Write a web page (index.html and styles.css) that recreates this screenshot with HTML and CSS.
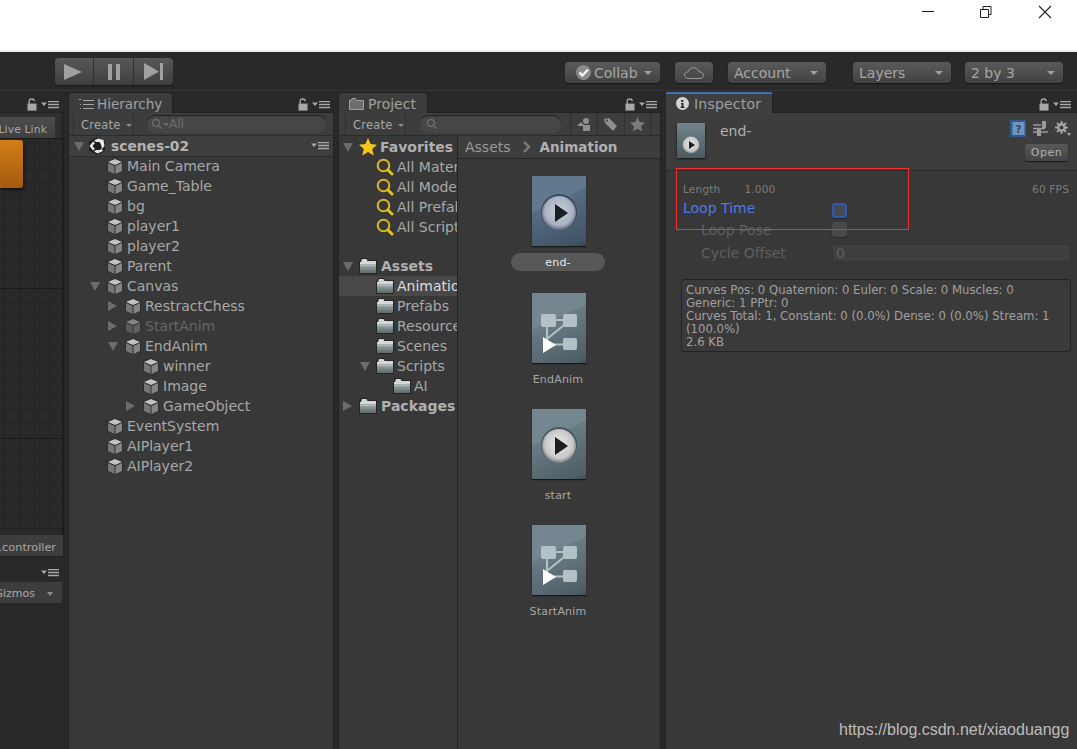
FILE: index.html
```html
<!DOCTYPE html>
<html lang="en">
<head>
<meta charset="utf-8">
<title>Unity Editor</title>
<link rel="stylesheet" href="styles.css">
</head>
<body>
<svg class="defs" width="0" height="0" aria-hidden="true">
  <defs>
    <linearGradient id="folderG" x1="0" y1="0" x2="0" y2="1"><stop offset="0" stop-color="#a9b3b3"/><stop offset=".35" stop-color="#8b9797"/><stop offset="1" stop-color="#5d6a6a"/></linearGradient>
    <radialGradient id="discG" cx=".5" cy=".45" r=".55"><stop offset="0" stop-color="#e8e8e8"/><stop offset=".75" stop-color="#c9c9c9"/><stop offset="1" stop-color="#77787a"/></radialGradient>
    <radialGradient id="discB" cx=".5" cy=".45" r=".55"><stop offset="0" stop-color="#c9d0dc"/><stop offset=".75" stop-color="#aab3c4"/><stop offset="1" stop-color="#5f6b7c"/></radialGradient>
    <symbol id="cube" viewBox="0 0 16 17">
      <path d="M8 0 16 3.500V13L8 17 0 13V3.500Z" fill="#2c2c2c"/>
      <path d="M8 1 15 4 8 7 1 4Z" fill="#c2c2c2"/>
      <path d="M1 5 7.500 8V16L1 13Z" fill="#767676"/>
      <path d="M15 5 8.500 8V16L15 13Z" fill="#858585"/>
    </symbol>
    <symbol id="folder" viewBox="0 0 18 16">
      <path d="M0 3H1L2 0H8L9 2H18V16H0Z" fill="#242424"/>
      <path d="M1 4H2L3 1H7.500L8.500 3H17V6H1Z" fill="#d3d8d8"/>
      <rect x="1" y="6" width="16" height="9" fill="url(#folderG)"/>
      <rect x="1" y="7" width="16" height="1" fill="#c2caca" opacity=".6"/>
    </symbol>
    <symbol id="lens" viewBox="0 0 18 18">
      <circle cx="7.500" cy="7.500" r="5.800" fill="none" stroke="#dcb91e" stroke-width="2"/>
      <path d="M12 12 16 16" stroke="#e6c21d" stroke-width="3" stroke-linecap="round"/>
    </symbol>
    <symbol id="star" viewBox="0 0 18 18">
      <path d="M9 0 11.600 6 18 6.800 13.200 11 14.700 17.500 9 14 3.300 17.500 4.800 11 0 6.800 6.400 6Z" fill="currentColor"/>
    </symbol>
    <symbol id="lock" viewBox="0 0 10 13">
      <path d="M2.200 6V3.400C2.200 1.800 3.300 1 4.700 1S7.200 1.800 7.200 3.200" fill="none" stroke="#a8a8a8" stroke-width="1.300"/>
      <rect x="0.500" y="5.600" width="9" height="7" fill="#a8a8a8"/>
    </symbol>
    <symbol id="menu" viewBox="0 0 18 8">
      <path d="M0 1.500H6L3 5Z" fill="#a8a8a8"/>
      <path d="M7 .5H18M7 3.500H18M7 6.500H18" stroke="#a8a8a8" stroke-width="1.500"/>
    </symbol>
    <symbol id="graph" viewBox="0 0 54 70">
      <path d="M16 27H38M15 30V46L37 28M18 51.500H36" stroke="#b4c2c8" stroke-width="2" fill="none"/>
      <rect x="9" y="21" width="15" height="13" rx="2" fill="#b4c2c8"/>
      <rect x="31" y="21" width="14" height="13" rx="2" fill="#b4c2c8"/>
      <rect x="31" y="45" width="14" height="12" rx="2" fill="#b4c2c8"/>
      <path d="M11 44 24 52 11 60Z" fill="#fff"/>
    </symbol>
    <symbol id="clip" viewBox="0 0 54 70">
      <circle cx="27" cy="36" r="18" fill="#3b4650" opacity=".7"/>
      <circle cx="27" cy="37" r="17" fill="url(#discG)"/>
      <path d="M23 28 36 37 23 46Z" fill="#1d1d1d"/>
    </symbol>
    <symbol id="clipSel" viewBox="0 0 54 70">
      <circle cx="27" cy="36" r="18" fill="#2d3948" opacity=".7"/>
      <circle cx="27" cy="37" r="17" fill="url(#discB)"/>
      <path d="M23 28 36 37 23 46Z" fill="#1a1d22"/>
    </symbol>
  </defs>
</svg>

<div class="app">
  <header class="titlebar">
    <svg class="winbtn" width="58" height="14" viewBox="0 0 58 14"><path d="M0 6.500H12" stroke="#222" fill="none"/></svg>
    <svg class="winbtn" width="58" height="14" viewBox="0 0 58 14"><path d="M.5 4.500H8.500V12.500H.5ZM3 4V1.500H11V9.500H9" stroke="#222" fill="none"/></svg>
    <svg class="winbtn" width="14" height="14" viewBox="0 0 14 14"><path d="M1 1 13 13M13 1 1 13" stroke="#222" stroke-width="1.100" fill="none"/></svg>
  </header>

  <div class="toolbar">
    <div class="playgroup">
      <button class="pbtn pbtn-play"><svg width="18" height="18" viewBox="0 0 18 18"><path d="M0 1 18 9 0 17Z" fill="#a0a0a0"/></svg></button>
      <button class="pbtn pbtn-pause"><svg width="12" height="16" viewBox="0 0 12 16"><path d="M0 0H4V16H0ZM8 0H12V16H8Z" fill="#a0a0a0"/></svg></button>
      <button class="pbtn pbtn-step"><svg width="19" height="17" viewBox="0 0 19 17"><path d="M0 0 15 8.500 0 17ZM16 0H19V17H16Z" fill="#a0a0a0"/></svg></button>
    </div>
    <div class="tb-spacer"></div>
    <button class="tbtn collab"><svg class="check-ico" width="15" height="15" viewBox="0 0 15 15"><circle cx="7.500" cy="7.500" r="7.500" fill="#8a8a8a"/><path d="M3.500 7.500 6.500 10.500 12 4.500" stroke="#f2f2f2" stroke-width="2.500" fill="none"/></svg><span>Collab</span><i class="caret"></i></button>
    <button class="tbtn cloud"><svg width="20" height="12" viewBox="0 0 20 12"><path d="M4.500 11.500C2 11.500.5 10 .5 8 .5 6 2 5 3.800 5 4.500 2.500 6.500.8 9.500.8 12.500.8 14.500 2.500 15 4.800 17.500 4.800 19.500 6 19.500 8.200 19.500 10.200 18 11.500 16 11.500Z" fill="none" stroke="#9a9a9a"/></svg></button>
    <button class="tbtn account"><span>Account</span><i class="caret"></i></button>
    <button class="tbtn layers"><span>Layers</span><i class="caret"></i></button>
    <button class="tbtn layout"><span>2 by 3</span><i class="caret"></i></button>
  </div>

  <main class="workspace">
    <section class="panel p-anim">
      <div class="phead"><div class="pctl"><svg class="i-lock"><use href="#lock"/></svg><svg class="i-menu"><use href="#menu"/></svg></div></div>
      <div class="anim-top"><span class="livelink">Live Link</span></div>
      <div class="graph"><div class="state"></div></div>
      <div class="anim-path"><span>.controller</span></div>
      <div class="phead phead-second"><div class="pctl"><svg class="i-menu"><use href="#menu"/></svg></div></div>
      <div class="gizmos"><span>Gizmos</span><i class="gsep"></i><i class="caret"></i></div>
      <div class="dark-fill"></div>
    </section>

    <section class="panel p-hier">
      <div class="phead">
        <div class="tab tab-hier"><svg class="tabicon" width="15" height="12" viewBox="0 0 15 12"><path d="M0 1.500H2M4 2.500H15M4 6.500H15M4 10.500H15M1 6.500H2M1 10.500H2" stroke="#a8a8a8" stroke-width="1.200" fill="none"/></svg><span>Hierarchy</span></div>
        <div class="pctl"><svg class="i-lock"><use href="#lock"/></svg><svg class="i-menu"><use href="#menu"/></svg></div>
      </div>
      <div class="pbar">
        <div class="create"><span>Create</span><i class="caret small"></i></div>
        <div class="search search-h"><svg width="12" height="12" viewBox="0 0 12 12"><circle cx="5" cy="5" r="3.500" fill="none" stroke="#6c6c6c" stroke-width="1.500"/><path d="M7.500 7.500 10.500 10.500" stroke="#6c6c6c" stroke-width="1.500"/></svg><i class="caret tiny"></i><span>All</span></div>
      </div>
      <div class="sceneRow">
        <i class="arr down"></i>
        <svg class="unity" width="18" height="18" viewBox="0 0 18 18"><path d="M9 0 17 4.500V13.500L9 18 1 13.500V4.500Z" fill="#1e1e1e"/><path d="M10 1.500 15.500 3 16.500 9 14 12 13 7.500 11.500 5H8L6 3.500ZM5 4.500 7 6 4.500 9 7 12 5 13.500 1.500 9ZM8 13H12L13.500 11.500 15 14 9.500 16.500 6 14.500Z" fill="#e8e8e8"/></svg>
        <strong>scenes-02</strong>
        <svg class="i-menu"><use href="#menu"/></svg>
      </div>
      <ul class="tree">
        <li class="row d1"><i class="slot"></i><svg class="i-cube"><use href="#cube"/></svg><span>Main Camera</span></li>
        <li class="row d1"><i class="slot"></i><svg class="i-cube"><use href="#cube"/></svg><span>Game_Table</span></li>
        <li class="row d1"><i class="slot"></i><svg class="i-cube"><use href="#cube"/></svg><span>bg</span></li>
        <li class="row d1"><i class="slot"></i><svg class="i-cube"><use href="#cube"/></svg><span>player1</span></li>
        <li class="row d1"><i class="slot"></i><svg class="i-cube"><use href="#cube"/></svg><span>player2</span></li>
        <li class="row d1"><i class="slot"></i><svg class="i-cube"><use href="#cube"/></svg><span>Parent</span></li>
        <li class="row d1"><i class="slot"><i class="arr down"></i></i><svg class="i-cube"><use href="#cube"/></svg><span>Canvas</span></li>
        <li class="row d2"><i class="slot"><i class="arr right"></i></i><svg class="i-cube"><use href="#cube"/></svg><span>RestractChess</span></li>
        <li class="row d2 inactive"><i class="slot"><i class="arr right"></i></i><svg class="i-cube"><use href="#cube"/></svg><span>StartAnim</span></li>
        <li class="row d2"><i class="slot"><i class="arr down"></i></i><svg class="i-cube"><use href="#cube"/></svg><span>EndAnim</span></li>
        <li class="row d3"><i class="slot"></i><svg class="i-cube"><use href="#cube"/></svg><span>winner</span></li>
        <li class="row d3"><i class="slot"></i><svg class="i-cube"><use href="#cube"/></svg><span>Image</span></li>
        <li class="row d3"><i class="slot"><i class="arr right"></i></i><svg class="i-cube"><use href="#cube"/></svg><span>GameObject</span></li>
        <li class="row d1"><i class="slot"></i><svg class="i-cube"><use href="#cube"/></svg><span>EventSystem</span></li>
        <li class="row d1"><i class="slot"></i><svg class="i-cube"><use href="#cube"/></svg><span>AIPlayer1</span></li>
        <li class="row d1"><i class="slot"></i><svg class="i-cube"><use href="#cube"/></svg><span>AIPlayer2</span></li>
      </ul>
    </section>

    <section class="panel p-proj">
      <div class="phead">
        <div class="tab tab-proj"><svg class="tabicon" width="15" height="12" viewBox="0 0 15 12"><path d="M.5 2.500H2L3 .5H6.500L7.500 2.500H14.500V11.500H.5Z" fill="#6e6e6e" stroke="#a0a0a0"/></svg><span>Project</span></div>
        <div class="pctl"><svg class="i-lock"><use href="#lock"/></svg><svg class="i-menu"><use href="#menu"/></svg></div>
      </div>
      <div class="pbar">
        <div class="create"><span>Create</span><i class="caret small"></i></div>
        <div class="search search-p"><svg width="12" height="12" viewBox="0 0 12 12"><circle cx="5" cy="5" r="3.500" fill="none" stroke="#6c6c6c" stroke-width="1.500"/><path d="M7.500 7.500 10.500 10.500" stroke="#6c6c6c" stroke-width="1.500"/></svg></div>
        <div class="pbar-tools">
          <span class="ptool"><svg width="14" height="13" viewBox="0 0 14 13"><path d="M0 8 4 4 8 8Z" fill="#8e8e8e"/><circle cx="9" cy="3" r="3" fill="#8e8e8e"/><rect x="6" y="7" width="7" height="6" fill="#8e8e8e"/></svg></span>
          <span class="ptool"><svg width="14" height="13" viewBox="0 0 14 13"><path d="M0 1 5 0 13 8 9 13 1 5Z" fill="#8e8e8e"/><circle cx="3" cy="2.500" r="1" fill="#3a3a3a"/></svg></span>
          <span class="ptool ptool-star"><svg class="i-star-g"><use href="#star"/></svg></span>
        </div>
      </div>
      <div class="proj-body">
        <div class="proj-tree">
          <div class="pr b"><i class="pslot"><i class="arr down"></i></i><svg class="i-star"><use href="#star"/></svg><span>Favorites</span></div>
          <div class="pr c"><svg class="i-lens"><use href="#lens"/></svg><span>All Materials</span></div>
          <div class="pr c"><svg class="i-lens"><use href="#lens"/></svg><span>All Models</span></div>
          <div class="pr c"><svg class="i-lens"><use href="#lens"/></svg><span>All Prefabs</span></div>
          <div class="pr c"><svg class="i-lens"><use href="#lens"/></svg><span>All Scripts</span></div>
          <div class="pr-gap"></div>
          <div class="pr b"><i class="pslot"><i class="arr down"></i></i><svg class="i-folder"><use href="#folder"/></svg><span>Assets</span></div>
          <div class="pr c active"><svg class="i-folder"><use href="#folder"/></svg><span>Animation</span></div>
          <div class="pr c"><svg class="i-folder"><use href="#folder"/></svg><span>Prefabs</span></div>
          <div class="pr c"><svg class="i-folder"><use href="#folder"/></svg><span>Resources</span></div>
          <div class="pr c"><svg class="i-folder"><use href="#folder"/></svg><span>Scenes</span></div>
          <div class="pr s"><i class="pslot"><i class="arr down"></i></i><svg class="i-folder"><use href="#folder"/></svg><span>Scripts</span></div>
          <div class="pr e"><svg class="i-folder"><use href="#folder"/></svg><span>AI</span></div>
          <div class="pr b"><i class="pslot"><i class="arr right"></i></i><svg class="i-folder"><use href="#folder"/></svg><span>Packages</span></div>
        </div>
        <div class="proj-assets">
          <div class="crumbs"><span>Assets</span><svg width="8" height="12" viewBox="0 0 8 12"><path d="M1 1 6 6 1 11" fill="none" stroke="#777" stroke-width="2.500"/></svg><strong>Animation</strong></div>
          <div class="assets">
            <figure class="asset selected"><div class="thumb"><svg class="thumb-art"><use href="#clipSel"/></svg></div><figcaption>end-</figcaption></figure>
            <figure class="asset"><div class="thumb"><svg class="thumb-art"><use href="#graph"/></svg></div><figcaption>EndAnim</figcaption></figure>
            <figure class="asset"><div class="thumb"><svg class="thumb-art"><use href="#clip"/></svg></div><figcaption>start</figcaption></figure>
            <figure class="asset"><div class="thumb"><svg class="thumb-art"><use href="#graph"/></svg></div><figcaption>StartAnim</figcaption></figure>
          </div>
        </div>
      </div>
    </section>

    <section class="panel p-insp">
      <div class="phead">
        <div class="tab tab-insp"><svg class="tabicon" width="13" height="13" viewBox="0 0 13 13"><circle cx="6.500" cy="6.500" r="6.500" fill="#d4d4d4"/><path d="M5 3H7.500V4.800H5ZM5 6H7.500V9.800H8.500V11H4.500V9.800H5.500V7H5Z" fill="#2a2a2a"/></svg><span>Inspector</span></div>
        <div class="pctl"><svg class="i-lock"><use href="#lock"/></svg><svg class="i-menu"><use href="#menu"/></svg></div>
      </div>
      <div class="insp-head">
        <div class="insp-icon"><svg width="18" height="18" viewBox="0 0 18 18"><circle cx="9" cy="9" r="8.500" fill="url(#discG)"/><path d="M7 5 13 9 7 13Z" fill="#1d1d1d"/></svg></div>
        <div class="insp-name">end-</div>
        <div class="insp-actions">
          <div class="insp-tools">
            <svg width="16" height="17" viewBox="0 0 16 17"><rect width="16" height="17" fill="#2f5a8c"/><rect x="2.500" y="2" width="12" height="13" fill="#6f95bd"/><text x="8.500" y="12.500" font-size="10" font-family="DejaVu Sans" font-weight="700" text-anchor="middle" fill="#24466e">?</text></svg>
            <svg width="15" height="15" viewBox="0 0 15 15"><path d="M0 4H8M0 11H15M0 7.500H12" stroke="#9a9a9a" stroke-width="1.500"/><rect x="9" y="0" width="4" height="7" fill="#9a9a9a"/><rect x="4" y="8" width="4" height="7" fill="#9a9a9a"/></svg>
            <svg width="16" height="16" viewBox="0 0 16 16"><circle cx="6.500" cy="6.500" r="3.200" fill="none" stroke="#a4a4a4" stroke-width="2.400"/><path d="M6.500 0V3M6.500 10V13M0 6.500H3M10 6.500H13M2 2 4 4M9 9 11 11M11 2 9 4M4 9 2 11" stroke="#a4a4a4" stroke-width="1.800"/><path d="M12 12H16L14 15Z" fill="#a4a4a4"/></svg>
          </div>
          <button class="open">Open</button>
        </div>
      </div>
      <div class="insp-body">
        <div class="clip-meta"><span class="len">Length</span><span class="lenv">1.000</span><span class="fps">60 FPS</span></div>
        <div class="field loop"><label>Loop Time</label><i class="check on"></i></div>
        <div class="field sub off"><label>Loop Pose</label><i class="check"></i></div>
        <div class="field sub off"><label>Cycle Offset</label><div class="numbox">0</div></div>
        <div class="infobox">Curves Pos: 0 Quaternion: 0 Euler: 0 Scale: 0 Muscles: 0<br>Generic: 1 PPtr: 0<br>Curves Total: 1, Constant: 0 (0.0%) Dense: 0 (0.0%) Stream: 1<br>(100.0%)<br>2.6 KB</div>
      </div>
    </section>
  </main>

  <div class="redbox"></div>
  <div class="watermark">https://blog.csdn.net/xiaoduangg</div>
</div>
</body>
</html>
```
FILE: styles.css
```css
* { box-sizing: border-box; }
html, body { margin: 0; padding: 0; height: 100%; overflow: hidden; }
body { font-family: "DejaVu Sans", sans-serif; background: #fff; color: #b4b4b4; }
.defs { position: absolute; }
i { display: block; font-style: normal; }
button { font-family: inherit; padding: 0; margin: 0; }
ul { list-style: none; margin: 0; padding: 0; }
figure { margin: 0; }

.app { position: relative; width: 1077px; height: 749px; display: flex; flex-direction: column; }

/* Window title bar */
.titlebar { height: 52px; flex: none; background: #fff; border-bottom: 2px solid #ececec; display: flex; justify-content: flex-end; align-items: flex-start; padding: 5px 25px 0 0; }
.winbtn { display: block; }

/* Main toolbar */
.toolbar { height: 39px; flex: none; background: #292929; border-bottom: 1px solid #363636; display: flex; align-items: flex-start; padding: 6px 14px 0 55px; }
.tb-spacer { flex: 1; }
.playgroup { display: flex; width: 118px; height: 27px; border-radius: 4px; background: linear-gradient(#585858, #3e3e3e); box-shadow: 0 1px 1px #161616; overflow: hidden; }
.pbtn { height: 27px; border: 0; background: none; display: flex; align-items: center; justify-content: center; border-right: 1px solid #2f2f2f; }
.pbtn-play { width: 39px; padding-right: 3px; }
.pbtn-pause { width: 40px; }
.pbtn-step { width: 39px; border-right: 0; }
.tbtn { height: 21px; margin-top: 4px; border: 0; border-radius: 4px; background: linear-gradient(#5a5a5a, #424242); box-shadow: 0 1px 1px #161616; color: #a6a6a6; font-size: 14px; display: flex; align-items: center; padding: 0 8px 0 6px; }
.tbtn span { flex: 1; text-align: left; }
.collab { width: 95px; margin-right: 15px; padding-left: 11px; }
.collab span { margin-left: 3px; }
.cloud { width: 38px; margin-right: 15px; justify-content: center; padding: 0; }
.account { width: 98px; margin-right: 27px; }
.layers { width: 98px; margin-right: 14px; }
.layout { width: 98px; }
.caret { width: 0; height: 0; flex: none; border-left: 4px solid transparent; border-right: 4px solid transparent; border-top: 4px solid #a0a0a0; }
.caret.small { border-width: 3px 3px 0; border-top-color: #8a8a8a; }
.caret.tiny { border-width: 3px 3px 0; border-top-color: #6c6c6c; }

/* Panels */
.workspace { flex: 1; min-height: 0; background: #292929; display: flex; gap: 4px; }
.panel { display: flex; flex-direction: column; min-width: 0; }
.p-anim { width: 64px; }
.p-hier { width: 266px; background: #383838; }
.p-proj { width: 323px; background: #383838; }
.p-insp { width: 412px; background: #383838; }
.p-hier, .p-proj, .p-insp { border-left: 1px solid #242424; border-right: 1px solid #242424; }
.p-insp { border-right: 0; }

.phead { height: 22px; flex: none; background: #292929; display: flex; align-items: flex-end; justify-content: space-between; padding-right: 3px; position: relative; box-shadow: inset 0 -1px 0 #222; }
.pctl { position: absolute; right: 3px; top: 7px; display: flex; align-items: center; gap: 4px; }
.p-anim .phead .pctl { right: 5px; }
.p-insp .phead .pctl { right: 6px; }
.i-lock { width: 10px; height: 13px; }
.i-menu { width: 18px; height: 8px; }
.tab { height: 21px; background: #3c3c3c; border: 1px solid #232323; border-bottom: 0; border-radius: 3px 3px 0 0; display: flex; align-items: center; font-size: 14px; color: #a0a0a0; margin-left: -1px; padding-top: 1px; position: relative; z-index: 1; }
.tab-hier { width: 105px; padding-left: 10px; gap: 3px; font-size: 13.500px; }
.tab-proj { width: 90px; padding-left: 10px; gap: 4px; }
.tab-insp { width: 108px; padding-left: 10px; gap: 5px; border-top: 2px solid #3f6fb5; background: #3f3f3f; padding-top: 0; letter-spacing: .2px; }
.pbar { height: 23px; flex: none; background: #3d3d3d; border-bottom: 1px solid #2b2b2b; display: flex; align-items: center; position: relative; padding-left: 6px; }
.p-hier .pbar { padding-left: 4px; }
.create { width: 61px; height: 22px; border-left: 1px solid #2f2f2f; border-right: 1px solid #2f2f2f; display: flex; align-items: center; gap: 6px; padding: 2px 0 0 7px; font-size: 11.500px; letter-spacing: .2px; color: #a8a8a8; }
.search { height: 18px; border-radius: 9px; background: #464646; box-shadow: inset 0 1px 1px #1f1f1f; display: flex; align-items: center; padding-left: 5px; font-size: 12px; color: #6e6e6e; }
.search-h { width: 181px; margin-left: 12px; }
.search-p { width: 143px; margin-left: 13px; padding-left: 7px; }
.pbar-tools { display: flex; margin-left: 8px; height: 22px; }
.ptool { width: 27px; display: flex; align-items: center; justify-content: center; border-left: 1px solid #2f2f2f; }
.ptool-star { border-right: 1px solid #2f2f2f; }
.i-star-g { width: 15px; height: 15px; color: #7b7b7b; }

/* Left animator column */
.anim-top { height: 25px; flex: none; background: #303030; border-right: 3px solid #262626; padding-top: 4px; }
.livelink { display: flex; align-items: center; justify-content: flex-end; height: 21px; width: 55px; padding: 3px 8px 0 0; background: linear-gradient(#4c4c4c, #3f3f3f); color: #a8a8a8; font-size: 10.800px; letter-spacing: .1px; white-space: nowrap; overflow: hidden; }
.graph { flex: none; height: 397px; position: relative; border-right: 2px solid #1d1d1d; background-color: #292929;
  background-image:
    linear-gradient(#1a1a1a 1px, transparent 1px),
    linear-gradient(#232323 1px, transparent 1px),
    linear-gradient(90deg, #232323 1px, transparent 1px);
  background-size: 100% 150px, 15px 15px, 15px 15px; background-position: 0 0, 4px 0, 4px 0; }
.state { position: absolute; left: 0; top: 2px; width: 23px; height: 48px; background: linear-gradient(#d27d18, #a55a0e); border-radius: 0 3px 3px 0; box-shadow: 1px 2px 3px #111; }
.anim-path { height: 22px; flex: none; background: #3d3d3d; border-right: 1px solid #222; border-bottom: 1px solid #222; display: flex; align-items: center; justify-content: flex-end; padding: 3px 7px 0 0; font-size: 11.300px; color: #a8a8a8; white-space: nowrap; overflow: hidden; }
.phead-second { height: 25px; box-shadow: none; }
.phead-second .pctl { top: 12px; }
.gizmos { height: 21px; width: 62px; flex: none; background: #3d3d3d; display: flex; align-items: center; justify-content: flex-end; gap: 6px; padding: 2px 9px 0 0; font-size: 11px; color: #a8a8a8; overflow: hidden; white-space: nowrap; position: relative; }
.gizmos .caret { border-width: 4px 3px 0; border-top-color: #909090; }
.gsep { width: 1px; height: 13px; background: #5a5a5a; }
.dark-fill { flex: 1; background: #282828; }

/* Hierarchy */
.sceneRow { height: 21px; flex: none; display: flex; align-items: center; background: #3e3e3e; border-bottom: 1px solid #2a2a2a; padding-left: 5px; position: relative; }
.sceneRow strong { font-size: 13.800px; color: #b4b4b4; margin-left: 5px; }
.sceneRow .i-menu { position: absolute; right: 4px; top: 6px; }
.unity { margin-left: 4px; }
.arr { width: 0; height: 0; flex: none; }
.arr.down { border-left: 5px solid transparent; border-right: 5px solid transparent; border-top: 9px solid #6c6c6c; }
.arr.right { border-top: 5px solid transparent; border-bottom: 5px solid transparent; border-left: 9px solid #6c6c6c; }
.tree { margin-top: -1px; }
.row { height: 20px; display: flex; align-items: center; font-size: 14px; color: #a8a8a8; white-space: nowrap; }
.slot { width: 17px; flex: none; display: flex; justify-content: flex-start; }
.d1 { padding-left: 21px; }
.d2 { padding-left: 39px; }
.d3 { padding-left: 57px; }
.i-cube { width: 16px; height: 17px; flex: none; margin-right: 4px; }
.inactive { color: #666; }
.inactive .i-cube { opacity: .55; }

/* Project */
.proj-body { flex: 1; display: flex; min-height: 0; }
.proj-tree { width: 119px; flex: none; border-right: 1px solid #232323; padding-top: 1px; overflow: hidden; }
.pr { height: 20px; display: flex; align-items: center; font-size: 14px; color: #a8a8a8; white-space: nowrap; }
.pr.b { padding-left: 4px; }
.pr.b span { font-weight: 700; font-size: 14px; color: #b0b0b0; margin-left: 4px; }
.pslot { width: 16px; flex: none; }
.pr.c { padding-left: 37px; }
.pr.s { padding-left: 21px; }
.pr.e { padding-left: 54px; }
.pr.c span, .pr.s span, .pr.e span { margin-left: 3px; }
.pr.e span { margin-left: 3px; }
.pr.active { background: #484848; color: #dedede; }
.pr-gap { height: 19px; }
.i-lens, .i-star { width: 18px; height: 18px; flex: none; }
.pr.b .i-star { margin-right: -1px; }
.i-star { color: #f6c51a; }
.i-folder { width: 18px; height: 16px; flex: none; }
.proj-assets { flex: 1; display: flex; flex-direction: column; min-width: 0; }
.crumbs { height: 23px; flex: none; border-bottom: 1px solid #252525; background: #3d3d3d; display: flex; align-items: center; font-size: 14px; color: #999; padding-left: 7px; gap: 12px; }
.crumbs strong { color: #b0b0b0; margin-left: -3px; font-size: 13.500px; }
.assets { display: flex; flex-direction: column; align-items: center; padding-top: 17px; }
.asset { width: 94px; height: 116px; display: flex; flex-direction: column; align-items: center; }
.asset.selected { height: 117px; }
.thumb { width: 54px; height: 70px; flex: none; background: linear-gradient(155deg, #748690 0 38%, #6a7c86 39%, #4f5f68 92%, #3f4c53 100%); box-shadow: 0 1px 1px #161616; }
.selected .thumb { background: linear-gradient(155deg, #62788e 0 38%, #576d84 39%, #415366 92%, #344352 100%); }
.thumb-art { display: block; width: 54px; height: 70px; }
.asset figcaption { margin: 7px 0 0 -2px; height: 18px; width: 94px; flex: none; display: flex; align-items: center; justify-content: center; font-size: 11px; letter-spacing: .2px; color: #a8a8a8; }
.selected figcaption { background: #585858; border-radius: 9px; color: #e6e6e6; }

/* Inspector */
.insp-head { height: 58px; flex: none; background: #3d3d3d; border-bottom: 1px solid #2a2a2a; display: flex; padding: 9px 6px 0 11px; }
.insp-icon { width: 28px; height: 35px; background: linear-gradient(#71838c, #4b5a62); box-shadow: 0 1px 2px #111; display: flex; align-items: center; justify-content: center; padding-top: 9px; margin-top: 1px; }
.insp-name { font-size: 14px; color: #b0b0b0; margin-left: 15px; margin-top: 1px; flex: 1; }
.insp-actions { display: flex; flex-direction: column; align-items: flex-end; }
.insp-tools { display: flex; gap: 7px; margin-top: -2px; align-items: center; }
.open { width: 43px; height: 17px; margin: 7px 3px 0 0; border: 0; border-radius: 3px; background: linear-gradient(#585858, #444); box-shadow: 0 1px 1px #171717; color: #b0b0b0; font-size: 11px; letter-spacing: .5px; }
.insp-body { flex: 1; padding: 0 5px 0 15px; }
.clip-meta { height: 14px; margin-top: 11px; padding-left: 2px; display: flex; font-size: 10.500px; color: #7c7c7c; letter-spacing: .2px; align-items: center; }
.lenv { margin-left: 24px; flex: 1; }
.fps { margin-right: 3px; }
.field { display: flex; align-items: center; height: 20px; font-size: 14px; }
.loop { margin: 2px 0 0; padding-left: 2px; color: #4f79ea; }
.loop label { width: 149px; flex: none; }
.sub { padding-left: 20px; color: #5f5f5f; height: 23px; }
.sub label { width: 131px; flex: none; }
.check { width: 15px; height: 15px; border-radius: 3px; background: #494949; box-shadow: 0 1px 1px #262626; }
.check.on { border: 2px solid #2f58b5; background: #454a55; margin-top: 4px; }
.numbox { flex: 1; height: 18px; background: #3f3f3f; border: 1px solid #343434; padding-left: 3px; line-height: 16px; color: #5f5f5f; margin-right: 1px; }
.infobox { margin: 15px 0 0; height: 73px; width: 390px; border: 1px solid #242424; border-radius: 3px; background: #3a3a3a; padding: 4px 4px; font-size: 11.700px; line-height: 13px; color: #a0a0a0; white-space: nowrap; }

/* Overlays */
.redbox { position: absolute; left: 676px; top: 168px; width: 233px; height: 62px; border: 1px solid #f0312f; }
.watermark { position: absolute; left: 839px; top: 721px; font-family: "Liberation Sans", sans-serif; font-size: 16px; line-height: 18px; color: #bdbdbd; }
```
